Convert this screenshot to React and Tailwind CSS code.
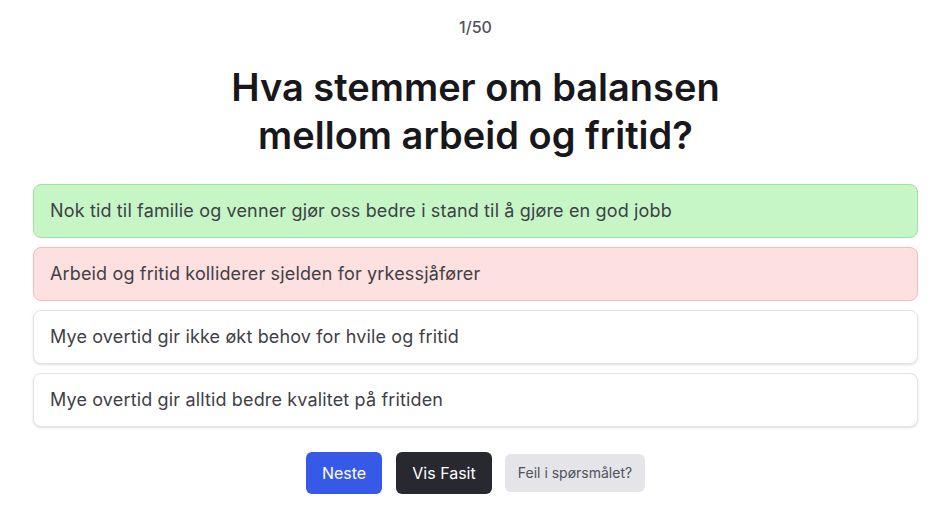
import React from "react";

const options = [
  { text: "Nok tid til familie og venner gjør oss bedre i stand til å gjøre en god jobb", cls: "bg-[#c6f6c6] border-[#9ee29e]" },
  { text: "Arbeid og fritid kolliderer sjelden for yrkessjåfører", cls: "bg-[#fde0e0] border-[#f7b9b9]" },
  { text: "Mye overtid gir ikke økt behov for hvile og fritid", cls: "bg-white border-[#e4e4e7] shadow-sm" },
  { text: "Mye overtid gir alltid bedre kvalitet på fritiden", cls: "bg-white border-[#e4e4e7] shadow-sm" },
];

export default function App() {
  return (
    <div className="min-h-[512px] bg-white pl-[33px] pr-[29px] pt-[15px]" style={{ fontFamily: "Inter, 'Noto Sans', sans-serif" }}>
      <div className="text-center text-base leading-6 font-medium text-[#52525b]">1/50</div>
      <h1 className="mt-[24px] text-center text-[38px] leading-[48px] font-semibold text-[#18181b]">
        Hva stemmer om balansen
        <br />
        mellom arbeid og fritid?
      </h1>
      <div className="mt-[25px] flex flex-col gap-[9px]">
        {options.map((o, i) => (
          <div key={i} className={`rounded-lg border px-4 py-3 text-lg leading-7 tracking-[0.15px] text-[#3f3f46] ${o.cls}`}>
            {o.text}
          </div>
        ))}
      </div>
      <div className="mt-[25px] flex items-center justify-center">
        <button className="w-[76px] rounded-md bg-[#3659e8] py-[9px] text-center text-base leading-6 text-white">Neste</button>
        <button className="ml-[14px] w-[96px] rounded-md bg-[#282830] py-[9px] text-center text-base leading-6 text-white">Vis Fasit</button>
        <button className="ml-[13px] w-[140px] rounded-md bg-[#e4e4e9] py-[9px] text-center text-sm leading-5 text-[#52525b]">Feil i spørsmålet?</button>
      </div>
    </div>
  );
}
